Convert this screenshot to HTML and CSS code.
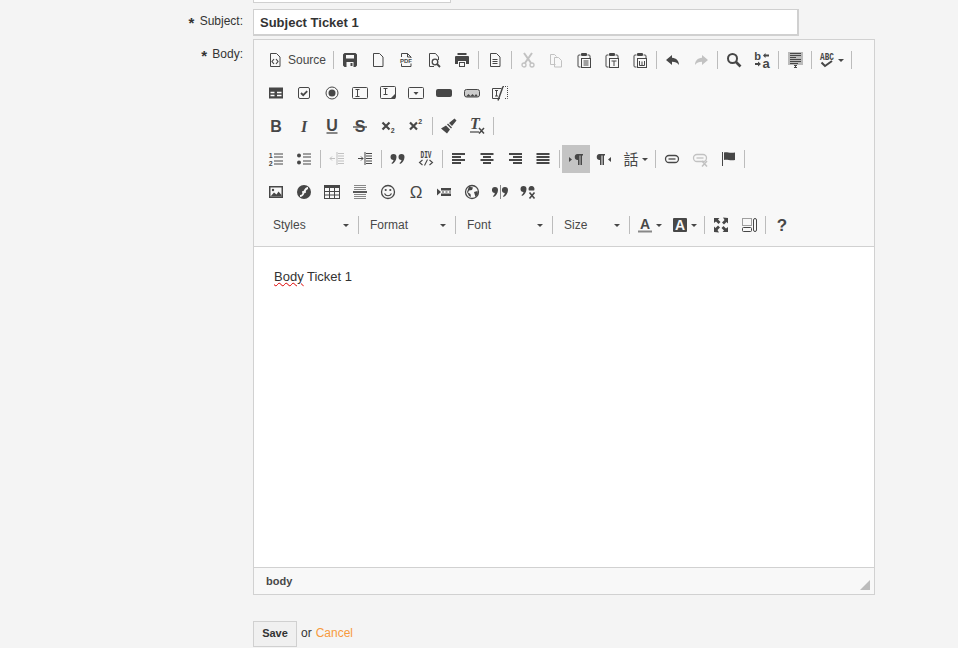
FILE: index.html
```html
<!DOCTYPE html>
<html>
<head>
<title>Edit Ticket</title>
<link rel="stylesheet" href="styles.css">
</head>
<body>
<svg class="defs" width="0" height="0">
  <symbol id="i-source" viewBox="0 0 16 16"><path d="M3.500 1.500h6l3.500 3.500v9.500h-9.500z" fill="none" stroke="currentColor"/><path d="M7 7l-2 2.500 2 2.500M9 7l2 2.500-2 2.500" fill="none" stroke="currentColor" stroke-width="1.200"/></symbol>
  <symbol id="i-save" viewBox="0 0 16 16"><path fill-rule="evenodd" d="M2.500 1h11l1.500 1.500v11l-1.500 1.500h-11l-1.500-1.500v-11zM4 3v3.500h8v-3.500zM4.500 10v5h7v-5zM8.500 11h2v3h-2z" fill="currentColor"/></symbol>
  <symbol id="i-new" viewBox="0 0 16 16"><path d="M3.500 1.500h6l3.500 3.500v9.500h-9.500z" fill="none" stroke="currentColor"/></symbol>
  <symbol id="i-preview" viewBox="0 0 16 16"><path d="M8 14.500h-4.500v-13h6l3 3.500v3" fill="none" stroke="currentColor"/><circle cx="9" cy="10" r="2.800" fill="none" stroke="currentColor" stroke-width="1.300"/><path d="M11 12l3 3" stroke="currentColor" stroke-width="1.800"/></symbol>
  <symbol id="i-print" viewBox="0 0 16 16"><path fill-rule="evenodd" d="M3.500 1h9v2h-9zM2 4h12q1 0 1 1v7h-3v-3h-8v3h-3v-7q0-1 1-1zM5 10h6v5h-6zM6 11v3h4v-3z" fill="currentColor"/></symbol>
  <symbol id="i-template" viewBox="0 0 16 16"><path d="M3.500 1.500h6l3.500 3.500v9.500h-9.500z" fill="none" stroke="currentColor"/><path d="M5.500 7.500h5M5.500 9.500h5M5.500 11.500h5" stroke="currentColor"/></symbol>
  <symbol id="i-cut" viewBox="0 0 16 16"><path d="M4 1l7 10M12 1l-7 10" stroke="currentColor" stroke-width="2"/><circle cx="4" cy="13" r="2" fill="none" stroke="currentColor" stroke-width="1.300"/><circle cx="12" cy="13" r="2" fill="none" stroke="currentColor" stroke-width="1.300"/></symbol>
  <symbol id="i-copy" viewBox="0 0 16 16"><path d="M7.500 12.500h-5v-10h4l2 2M6.500 5.500h4l3 3v6.500h-7z" fill="none" stroke="currentColor"/></symbol>
  <symbol id="i-paste" viewBox="0 0 16 16"><path d="M4.500 15h-1.500q-1 0-1-1v-10q0-1 1-1h1.500M11.500 3h1.500q1 0 1 1v2" fill="none" stroke="currentColor"/><rect x="5" y="1" width="6" height="3" rx="1" fill="currentColor"/><rect x="5.500" y="6.500" width="9" height="9" fill="none" stroke="currentColor"/><path d="M7.500 9h5M7.500 11h5M7.500 13h5" stroke="currentColor"/></symbol>
  <symbol id="i-pastetext" viewBox="0 0 16 16"><path d="M4.500 15h-1.500q-1 0-1-1v-10q0-1 1-1h1.500M11.500 3h1.500q1 0 1 1v2" fill="none" stroke="currentColor"/><rect x="5" y="1" width="6" height="3" rx="1" fill="currentColor"/><rect x="5.500" y="6.500" width="9" height="9" fill="none" stroke="currentColor"/><path d="M7.500 9h5M10 9v5" stroke="currentColor"/></symbol>
  <symbol id="i-pasteword" viewBox="0 0 16 16"><path d="M4.500 15h-1.500q-1 0-1-1v-10q0-1 1-1h1.500M11.500 3h1.500q1 0 1 1v2" fill="none" stroke="currentColor"/><rect x="5" y="1" width="6" height="3" rx="1" fill="currentColor"/><rect x="5.500" y="6.500" width="9" height="9" fill="none" stroke="currentColor"/><path d="M7.500 9v4.500h5v-4.500M10 9.500v4" fill="none" stroke="currentColor"/></symbol>
  <symbol id="i-undo" viewBox="0 0 16 16"><path d="M7 3l-6 5 6 5v-3.200c3 0 5.500 1 7 3.200 0-4-2.500-7-7-7.200z" fill="currentColor"/></symbol>
  <symbol id="i-redo" viewBox="0 0 16 16"><path d="M9 3l6 5-6 5v-3.200c-3 0-5.500 1-7 3.200 0-4 2.500-7 7-7.200z" fill="currentColor"/></symbol>
  <symbol id="i-find" viewBox="0 0 16 16"><circle cx="6.500" cy="6.500" r="4.500" fill="none" stroke="currentColor" stroke-width="2"/><path d="M10 10l4.500 4.500" stroke="currentColor" stroke-width="2.600"/></symbol>
  <symbol id="i-selectall" viewBox="0 0 16 16"><rect x="1" y="0" width="15" height="13" fill="#bbb"/><path d="M3 1.500h11M3 3.500h11M3 5.500h6M3 7.500h11M3 9.500h11M3 11.500h8" stroke="currentColor"/><path d="M7 13.500h3M8.500 13.500v2M7 15.500h3" stroke="currentColor"/></symbol>
  <symbol id="i-form" viewBox="0 0 16 16"><rect x="1" y="2.500" width="14" height="11" fill="currentColor"/><path d="M2.500 7.500h4M9 7.500h4.500M2.500 10.500h4M9 10.500h4.500" stroke="#fff" stroke-width="1.500"/></symbol>
  <symbol id="i-check" viewBox="0 0 16 16"><rect x="2.500" y="2.500" width="11" height="11" rx="1.500" fill="none" stroke="currentColor"/><path d="M5 8l2.200 2.200 4-4" fill="none" stroke="currentColor" stroke-width="1.800"/></symbol>
  <symbol id="i-radio" viewBox="0 0 16 16"><circle cx="8" cy="8" r="6" fill="none" stroke="currentColor"/><circle cx="8" cy="8" r="3.500" fill="currentColor"/></symbol>
  <symbol id="i-field" viewBox="0 0 16 16"><rect x=".5" y="2.500" width="15" height="11" rx="1" fill="none" stroke="currentColor"/><path d="M3.500 4.500h4M5.500 4.500v7M3.500 11.500h4" stroke="currentColor"/></symbol>
  <symbol id="i-textarea" viewBox="0 0 16 16"><rect x=".5" y="1.500" width="15" height="12" rx="1" fill="none" stroke="currentColor"/><path d="M3.500 3.500h4M5.500 3.500v6M3.500 9.500h4" stroke="currentColor"/><path d="M15 9l-5 5h5z" fill="currentColor"/></symbol>
  <symbol id="i-select" viewBox="0 0 16 16"><rect x=".5" y="2.500" width="15" height="11" rx="1" fill="none" stroke="currentColor"/><path d="M5.500 7h5l-2.500 3z" fill="currentColor"/></symbol>
  <symbol id="i-button" viewBox="0 0 16 16"><rect y="4" width="16" height="8" rx="2" fill="currentColor"/></symbol>
  <symbol id="i-imagebtn" viewBox="0 0 16 16"><rect x=".5" y="4.500" width="15" height="7.500" rx="2" fill="#ccc" stroke="currentColor"/><path d="M2 11.500l2.500-2.500 2 2 2-2 2 2 1.500-2 2 2.500z" fill="currentColor"/></symbol>
  <symbol id="i-hidden" viewBox="0 0 16 16"><path d="M8 13.500h-7.500v-10h9" fill="none" stroke="currentColor"/><path d="M3 5.500h3M4.500 5.500v5.500M3 11h3" stroke="currentColor"/><path d="M6 15.500l5-14" stroke="currentColor" stroke-width="1.500"/><path d="M11 1.500h4.500v12h-3" fill="none" stroke="currentColor" stroke-dasharray="1 1"/></symbol>
  <symbol id="i-brush" viewBox="0 0 16 16"><path d="M13.500 .5l2 2-4.500 5.500-3-3zM7 5.500l4 4-1 1-4-4zM5 7.500l4 4-3 4-6-5z" fill="currentColor"/></symbol>
  <symbol id="i-ul" viewBox="0 0 16 16"><circle cx="3" cy="4.500" r="2" fill="currentColor"/><circle cx="3" cy="11.500" r="2" fill="currentColor"/><path d="M7 3h8M7 6h8M7 10h8M7 13h8" stroke="currentColor"/></symbol>
  <symbol id="i-outdent" viewBox="0 0 16 16"><path d="M9 2.500h6M9 5h6M9 7.500h6M9 10h6M9 12.500h6M8 1v13" stroke="currentColor"/><path d="M1 7.500h5M3 5.500l-2 2 2 2" fill="none" stroke="currentColor"/></symbol>
  <symbol id="i-indent" viewBox="0 0 16 16"><path d="M9 2.500h6M9 5h6M9 7.500h6M9 10h6M9 12.500h6M8 1v13" stroke="currentColor"/><path d="M1 7.500h5M4 5.500l2 2-2 2" fill="none" stroke="currentColor"/></symbol>
  <symbol id="i-quote" viewBox="0 0 16 16"><path fill-rule="evenodd" d="M3.500 3a3 3 0 0 1 3 3c0 3-2 6-4.500 7l-.5-1c1-.7 1.800-1.700 2-3a3 3 0 0 1 0-6zM11.500 3a3 3 0 0 1 3 3c0 3-2 6-4.500 7l-.5-1c1-.7 1.800-1.700 2-3a3 3 0 0 1 0-6z" fill="currentColor"/></symbol>
  <symbol id="i-left" viewBox="0 0 16 16"><path d="M1 3h13M1 6h9M1 9h13M1 12h9" stroke="currentColor" stroke-width="2"/></symbol>
  <symbol id="i-center" viewBox="0 0 16 16"><path d="M1.500 3h13M4 6h8M1.500 9h13M4 12h8" stroke="currentColor" stroke-width="2"/></symbol>
  <symbol id="i-right" viewBox="0 0 16 16"><path d="M2 3h13M6 6h9M2 9h13M6 12h9" stroke="currentColor" stroke-width="2"/></symbol>
  <symbol id="i-justify" viewBox="0 0 16 16"><path d="M1.500 3h13M1.500 6h13M1.500 9h13M1.500 12h13" stroke="currentColor" stroke-width="2"/></symbol>
  <symbol id="i-ltr" viewBox="0 0 16 16"><path d="M1 6l3 2.500-3 2.500z" fill="currentColor"/><path fill-rule="evenodd" d="M9 3h6v1.500h-1v9.500h-1.500v-9.500h-1v9.500h-1.500v-5a2.800 2.800 0 0 1-.5-6z" fill="currentColor"/></symbol>
  <symbol id="i-rtl" viewBox="0 0 16 16"><path d="M15 6l-3 2.500 3 2.500z" fill="currentColor"/><path fill-rule="evenodd" d="M3 3h6v1.500h-1v9.500h-1.500v-9.500h-1v9.500h-1.500v-5a2.800 2.800 0 0 1-.5-6z" fill="currentColor"/></symbol>
  <symbol id="i-link" viewBox="0 0 16 16"><rect x="1.500" y="4.500" width="13" height="7" rx="3.500" fill="none" stroke="currentColor" stroke-width="1.300"/><path d="M4.500 8h7" stroke="currentColor" stroke-width="1.300"/></symbol>
  <symbol id="i-unlink" viewBox="0 0 16 16"><rect x="1.500" y="3.500" width="13" height="7" rx="3.500" fill="none" stroke="currentColor" stroke-width="1.300"/><path d="M4.500 7h7" stroke="currentColor" stroke-width="1.300"/><path d="M10 10l5 5.500M15 10l-5 5.500" stroke="currentColor" stroke-width="1.500"/></symbol>
  <symbol id="i-anchor" viewBox="0 0 16 16"><path d="M2.500 1v14" stroke="currentColor"/><path d="M4 1.500c3-1 5 1 11 0v7.500c-5 1-8-1-11 0z" fill="currentColor"/></symbol>
  <symbol id="i-image" viewBox="0 0 16 16"><rect x="1" y="2" width="14" height="12" fill="currentColor"/><rect x="2.500" y="3.500" width="11" height="9" fill="#f8f8f8"/><path d="M2.500 12.500l3.500-4 2.500 2 2-3 3 3.500v1.500z" fill="currentColor"/><circle cx="5" cy="6" r="1.200" fill="currentColor"/></symbol>
  <symbol id="i-flash" viewBox="0 0 16 16"><circle cx="8" cy="8" r="7" fill="currentColor"/><path d="M4 12c3 0 3-2 4-4s2-4 4-4" fill="none" stroke="#f8f8f8" stroke-width="1.800"/><path d="M6 8h4" stroke="#f8f8f8" stroke-width="1.500"/></symbol>
  <symbol id="i-table" viewBox="0 0 16 16"><rect x=".5" y="1.500" width="15" height="13" fill="none" stroke="currentColor"/><rect x="1" y="2" width="14" height="2" fill="currentColor"/><path d="M5.500 4v10M10.500 4v10M1 7.500h14M1 11h14" stroke="currentColor"/></symbol>
  <symbol id="i-hr" viewBox="0 0 16 16"><path d="M2 1.500h12M2 3.500h12M2 5.500h12M2 10.500h12M2 12.500h12M2 14.500h12" stroke="#888"/><path d="M1 8h14" stroke="currentColor" stroke-width="1.800"/></symbol>
  <symbol id="i-smiley" viewBox="0 0 16 16"><circle cx="8" cy="8" r="6.500" fill="none" stroke="currentColor" stroke-width="1.300"/><circle cx="5.700" cy="6" r="1.100" fill="currentColor"/><circle cx="10.300" cy="6" r="1.100" fill="currentColor"/><path d="M4.500 9.500c1.500 3 5.500 3 7 0" fill="none" stroke="currentColor" stroke-width="1.200"/></symbol>
  <symbol id="i-pagebreak" viewBox="0 0 16 16"><path d="M1 4.500l4 3.500-4 3.500z" fill="currentColor"/><path d="M5 4h10v2.500h-10zM5 9.500h10v2.500h-10z" fill="currentColor"/><path d="M6 8h2M9.500 8h2M13 8h2" stroke="currentColor"/></symbol>
  <symbol id="i-iframe" viewBox="0 0 16 16"><circle cx="8" cy="8" r="6.500" fill="none" stroke="currentColor" stroke-width="1.300"/><path d="M5 2.500l4 1-1 2.500-3 .5-1 2 2.500 1.500.5 3-2-1-2-4zM10 8l3.500-1 .5 3-2.500 3z" fill="currentColor"/></symbol>
  <symbol id="i-quotesplit" viewBox="0 0 16 16"><path fill-rule="evenodd" d="M3 3a3 3 0 0 1 3 3c0 3-2 6-4.500 7l-.5-1c1-.7 1.600-1.700 1.800-3a3 3 0 0 1 .2-6zM13 3a3 3 0 0 1 3 3c0 3-2 6-4.500 7l-.5-1c1-.7 1.600-1.700 1.800-3a3 3 0 0 1 .2-6z" fill="currentColor"/><path d="M8.500 1v14" stroke="#888"/></symbol>
  <symbol id="i-quotex" viewBox="0 0 16 16"><path fill-rule="evenodd" d="M3.500 2a3 3 0 0 1 3 3c0 3-2 6-4.500 7l-.5-1c1-.7 1.800-1.700 2-3a3 3 0 0 1 0-6zM11.500 2a3 3 0 0 1 2.600 4.500h-5.200a3 3 0 0 1 2.600-4.500z" fill="currentColor"/><path d="M9.500 8.500l5 6M14.500 8.500l-5 6" stroke="currentColor" stroke-width="1.600"/></symbol>
  <symbol id="i-max" viewBox="0 0 16 16"><path d="M1 1h5.500l-1.500 1.500 2.500 2.500-2 2-2.500-2.500-2 1.500zM15 1v5.500l-1.500-1.500-2.500 2.500-2-2 2.500-2.500-1.500-2.500zM1 15v-5.500l1.500 1.500 2.500-2.500 2 2-2.500 2.500 1.500 2.500zM15 15h-5.500l1.500-1.500-2.500-2.500 2-2 2.500 2.500 2-1.500z" fill="currentColor"/></symbol>
  <symbol id="i-blocks" viewBox="0 0 16 16"><path d="M1.500 1.500h9v7h-9z" fill="none" stroke="currentColor" stroke-dasharray="1 1"/><rect x="1.500" y="10.500" width="9" height="4" rx="1" fill="none" stroke="currentColor"/><rect x="12.500" y="1.500" width="3" height="13" rx="1.500" fill="none" stroke="currentColor"/></symbol>
</svg>

<form class="ticket">
  <div class="stub"></div>

  <div class="row row-subject">
    <label class="lbl"><span class="req">*</span> Subject:</label>
    <input class="subject" type="text" value="Subject Ticket 1">
  </div>

  <div class="row row-body">
    <label class="lbl"><span class="req">*</span> Body:</label>
    <div class="editor">
      <div class="toolbar">
        <div class="tb-row">
          <a class="btn btn-source"><svg class="ico"><use href="#i-source"/></svg><span>Source</span></a>
          <i class="sep"></i>
          <a class="btn"><svg class="ico"><use href="#i-save"/></svg></a>
          <a class="btn"><svg class="ico"><use href="#i-new"/></svg></a>
          <a class="btn"><svg class="ico" viewBox="0 0 16 16"><path d="M3.500 5v-3.500h6l3.500 3.500v1M3.500 11.500v3h9.500v-3M9.500 1.500v3.500h3.500" fill="none" stroke="currentColor"/><text x="8" y="10.500" class="t-pdf">PDF</text></svg></a>
          <a class="btn"><svg class="ico"><use href="#i-preview"/></svg></a>
          <a class="btn"><svg class="ico"><use href="#i-print"/></svg></a>
          <i class="sep"></i>
          <a class="btn"><svg class="ico"><use href="#i-template"/></svg></a>
          <i class="sep"></i>
          <a class="btn off"><svg class="ico"><use href="#i-cut"/></svg></a>
          <a class="btn off"><svg class="ico"><use href="#i-copy"/></svg></a>
          <a class="btn"><svg class="ico"><use href="#i-paste"/></svg></a>
          <a class="btn"><svg class="ico"><use href="#i-pastetext"/></svg></a>
          <a class="btn"><svg class="ico"><use href="#i-pasteword"/></svg></a>
          <i class="sep"></i>
          <a class="btn"><svg class="ico"><use href="#i-undo"/></svg></a>
          <a class="btn off"><svg class="ico"><use href="#i-redo"/></svg></a>
          <i class="sep"></i>
          <a class="btn"><svg class="ico"><use href="#i-find"/></svg></a>
          <a class="btn"><svg class="ico" viewBox="0 0 16 16"><text x="3.500" y="8" class="t-rep">b</text><text x="12" y="15.500" class="t-rep t-rep-a">a</text><path d="M9 3.500l2.500-2.500v1.500h3.500v2h-3.500v1.500zM1 11h3v-1.500l3 2.500-3 2.500v-1.500h-3z" fill="currentColor"/></svg></a>
          <i class="sep"></i>
          <a class="btn"><svg class="ico"><use href="#i-selectall"/></svg></a>
          <i class="sep"></i>
          <a class="btn btn-menu"><svg class="ico" viewBox="0 0 16 16"><text x="8" y="7.500" class="t-mono" textLength="14" lengthAdjust="spacingAndGlyphs">ABC</text><path d="M2.500 10.500l3.500 3.500 7-5" fill="none" stroke="currentColor" stroke-width="2"/></svg><b class="caret"></b></a>
          <i class="sep"></i>
        </div>
        <div class="tb-row">
          <a class="btn"><svg class="ico"><use href="#i-form"/></svg></a>
          <a class="btn"><svg class="ico"><use href="#i-check"/></svg></a>
          <a class="btn"><svg class="ico"><use href="#i-radio"/></svg></a>
          <a class="btn"><svg class="ico"><use href="#i-field"/></svg></a>
          <a class="btn"><svg class="ico"><use href="#i-textarea"/></svg></a>
          <a class="btn"><svg class="ico"><use href="#i-select"/></svg></a>
          <a class="btn"><svg class="ico"><use href="#i-button"/></svg></a>
          <a class="btn"><svg class="ico"><use href="#i-imagebtn"/></svg></a>
          <a class="btn"><svg class="ico"><use href="#i-hidden"/></svg></a>
        </div>
        <div class="tb-row">
          <a class="btn"><svg class="ico" viewBox="0 0 16 16"><text x="8" y="14" class="t-big">B</text></svg></a>
          <a class="btn"><svg class="ico" viewBox="0 0 16 16"><text x="8" y="14" class="t-ital">I</text></svg></a>
          <a class="btn"><svg class="ico" viewBox="0 0 16 16"><text x="8" y="12.500" class="t-big">U</text><path d="M2.500 15h11" stroke="currentColor" stroke-width="1.300"/></svg></a>
          <a class="btn"><svg class="ico" viewBox="0 0 16 16"><text x="8" y="14" class="t-big">S</text><path d="M1 9h14" stroke="currentColor" stroke-width="1.300"/></svg></a>
          <a class="btn"><svg class="ico" viewBox="0 0 16 16"><path d="M2.500 4.500l7 7M9.500 4.500l-7 7" stroke="currentColor" stroke-width="2.200"/><text x="12.800" y="15" class="t-num">2</text></svg></a>
          <a class="btn"><svg class="ico" viewBox="0 0 16 16"><path d="M2 4.500l7 7M9 4.500l-7 7" stroke="currentColor" stroke-width="2.200"/><text x="12.300" y="6" class="t-num">2</text></svg></a>
          <i class="sep"></i>
          <a class="btn"><svg class="ico"><use href="#i-brush"/></svg></a>
          <a class="btn"><svg class="ico" viewBox="0 0 16 16"><text x="6" y="11" class="t-ital">T</text><path d="M1 14h9" stroke="currentColor" stroke-width="1.200"/><path d="M10 10l5 5.500M15 10l-5 5.500" stroke="currentColor" stroke-width="1.500"/></svg></a>
          <i class="sep"></i>
        </div>
        <div class="tb-row">
          <a class="btn"><svg class="ico" viewBox="0 0 16 16"><path d="M6 3h9M6 6h9M6 10h9M6 13h9" stroke="currentColor"/><text x="2.800" y="6.500" class="t-num">1</text><text x="2.800" y="14.500" class="t-num">2</text></svg></a>
          <a class="btn"><svg class="ico"><use href="#i-ul"/></svg></a>
          <i class="sep"></i>
          <a class="btn off"><svg class="ico"><use href="#i-outdent"/></svg></a>
          <a class="btn"><svg class="ico"><use href="#i-indent"/></svg></a>
          <i class="sep"></i>
          <a class="btn"><svg class="ico"><use href="#i-quote"/></svg></a>
          <a class="btn"><svg class="ico" viewBox="0 0 16 16"><text x="8" y="6.500" class="t-mono" textLength="11" lengthAdjust="spacingAndGlyphs">DIV</text><path d="M4.500 9l-3 2.500 3 2.500M11.500 9l3 2.500-3 2.500M9.500 8.500l-3 6" fill="none" stroke="currentColor" stroke-width="1.100"/></svg></a>
          <i class="sep"></i>
          <a class="btn"><svg class="ico"><use href="#i-left"/></svg></a>
          <a class="btn"><svg class="ico"><use href="#i-center"/></svg></a>
          <a class="btn"><svg class="ico"><use href="#i-right"/></svg></a>
          <a class="btn"><svg class="ico"><use href="#i-justify"/></svg></a>
          <i class="sep"></i>
          <a class="btn on"><svg class="ico"><use href="#i-ltr"/></svg></a>
          <a class="btn"><svg class="ico"><use href="#i-rtl"/></svg></a>
          <a class="btn btn-menu"><svg class="ico" viewBox="0 0 16 16"><text x="8" y="14" class="t-cjk">話</text></svg><b class="caret"></b></a>
          <i class="sep"></i>
          <a class="btn"><svg class="ico"><use href="#i-link"/></svg></a>
          <a class="btn off"><svg class="ico"><use href="#i-unlink"/></svg></a>
          <a class="btn"><svg class="ico"><use href="#i-anchor"/></svg></a>
          <i class="sep"></i>
        </div>
        <div class="tb-row">
          <a class="btn"><svg class="ico"><use href="#i-image"/></svg></a>
          <a class="btn"><svg class="ico"><use href="#i-flash"/></svg></a>
          <a class="btn"><svg class="ico"><use href="#i-table"/></svg></a>
          <a class="btn"><svg class="ico"><use href="#i-hr"/></svg></a>
          <a class="btn"><svg class="ico"><use href="#i-smiley"/></svg></a>
          <a class="btn"><svg class="ico" viewBox="0 0 16 16"><text x="8" y="14" class="t-omega">Ω</text></svg></a>
          <a class="btn"><svg class="ico"><use href="#i-pagebreak"/></svg></a>
          <a class="btn"><svg class="ico"><use href="#i-iframe"/></svg></a>
          <a class="btn"><svg class="ico"><use href="#i-quotesplit"/></svg></a>
          <a class="btn"><svg class="ico"><use href="#i-quotex"/></svg></a>
        </div>
        <div class="tb-row">
          <a class="combo combo-first"><span>Styles</span><b class="caret"></b></a>
          <i class="sep"></i>
          <a class="combo"><span>Format</span><b class="caret"></b></a>
          <i class="sep"></i>
          <a class="combo"><span>Font</span><b class="caret"></b></a>
          <i class="sep"></i>
          <a class="combo combo-size"><span>Size</span><b class="caret"></b></a>
          <i class="sep"></i>
          <a class="btn btn-menu"><svg class="ico" viewBox="0 0 16 16"><text x="8" y="12" class="t-color">A</text><path d="M1 14.500h14" stroke="#888" stroke-width="2"/></svg><b class="caret"></b></a>
          <a class="btn btn-menu"><svg class="ico" viewBox="0 0 16 16"><rect x="1" y="1" width="14" height="14" rx="1" fill="currentColor"/><text x="8" y="13" class="t-color t-white">A</text></svg><b class="caret"></b></a>
          <i class="sep"></i>
          <a class="btn"><svg class="ico"><use href="#i-max"/></svg></a>
          <a class="btn"><svg class="ico"><use href="#i-blocks"/></svg></a>
          <i class="sep"></i>
          <a class="btn"><svg class="ico" viewBox="0 0 16 16"><text x="8" y="14" class="t-help">?</text></svg></a>
        </div>
      </div>
      <div class="content"><p><span class="misspelt">Body</span> Ticket 1</p></div>
      <div class="path">body<span class="grip"></span></div>
    </div>
  </div>

  <div class="actions">
    <button class="save" type="button">Save</button>
    <span class="or">or</span>
    <a class="cancel">Cancel</a>
  </div>
</form>
</body>
</html>
```

FILE: styles.css
```css
body {
    margin: 0;
    background: #f4f4f4;
    color: #333;
    font-family: "Liberation Sans", Arial, sans-serif;
    font-size: 12px;
    overflow: hidden;
}

.defs {
    position: absolute;
}

.ticket {
    width: 875px;
}

.stub {
    width: 198px;
    height: 3px;
    margin-left: 253px;
    background: #fff;
    border: 1px solid #d0d0d0;
    border-top: 0;
    box-sizing: border-box;
}

.row {
    display: flex;
    gap: 10px;
}

.row-subject {
    margin-top: 6px;
}

.row-body {
    margin-top: 3px;
}

.lbl {
    width: 243px;
    flex: none;
    text-align: right;
    padding-top: 5px;
    box-sizing: border-box;
    line-height: 14px;
}

.row-body .lbl {
    padding-top: 8px;
}

.req {
    font-weight: bold;
    font-size: 15px;
    line-height: 12px;
    margin-right: 2px;
    vertical-align: -3px;
}

.subject {
    width: 546px;
    height: 27px;
    box-sizing: border-box;
    margin: 0;
    padding: 0 6px;
    border: 1px solid #d0d0d0;
    border-width: 1px 2px 2px 1px;
    background: #fff;
    color: #333;
    font: bold 13px "Liberation Sans", Arial, sans-serif;
    outline: 0;
}

.editor {
    width: 622px;
    height: 556px;
    box-sizing: border-box;
    border: 1px solid #d1d1d1;
    background: #f8f8f8;
    display: flex;
    flex-direction: column;
}

.toolbar {
    padding: 6px 0 0 8px;
    height: 207px;
    box-sizing: border-box;
    border-bottom: 1px solid #d1d1d1;
    display: flex;
    flex-direction: column;
    gap: 5px;
}

.tb-row {
    display: flex;
    align-items: center;
    height: 28px;
}

.btn {
    flex: none;
    width: 28px;
    height: 28px;
    display: flex;
    align-items: center;
    justify-content: center;
    color: #474747;
}

.ico {
    width: 16px;
    height: 16px;
    flex: none;
    overflow: visible;
}

.off .ico {
    opacity: .3;
}

.on {
    background: #c4c4c4;
}

.btn-source {
    width: 69px;
    justify-content: flex-start;
    padding-left: 5px;
    box-sizing: border-box;
    gap: 5px;
}

.btn-menu {
    width: 35px;
    justify-content: flex-start;
    padding-left: 5px;
    box-sizing: border-box;
    gap: 3px;
}

.caret {
    width: 0;
    height: 0;
    border: 3px solid transparent;
    border-top-color: #474747;
    border-bottom: 0;
    flex: none;
}

.sep {
    flex: none;
    width: 1px;
    height: 18px;
    margin: 0 2px;
    background: #bcbcbc;
}

.combo {
    flex: none;
    width: 92px;
    height: 28px;
    box-sizing: border-box;
    padding: 0 7px 0 9px;
    display: flex;
    align-items: center;
    justify-content: space-between;
    color: #484848;
}

.combo-first {
    margin-left: 2px;
}

.combo-size {
    width: 72px;
}

.content {
    flex: 1;
    background: #fff;
    padding: 0 20px;
    font-size: 13px;
    color: #333;
}

.content p {
    margin: 21px 0 0;
    line-height: 18px;
}

.misspelt {
    text-decoration: underline wavy #d00;
    text-decoration-thickness: 1px;
}

.path {
    position: relative;
    height: 26px;
    padding-left: 12px;
    line-height: 26px;
    border-top: 1px solid #d1d1d1;
    font-size: 11px;
    font-weight: bold;
    color: #484848;
}

.grip {
    position: absolute;
    right: 4px;
    bottom: 4px;
    width: 0;
    height: 0;
    border-left: 10px solid transparent;
    border-bottom: 10px solid #bcbcbc;
}

.actions {
    margin: 26px 0 0 253px;
    display: flex;
    align-items: center;
    gap: 3px;
}

.save {
    width: 44px;
    height: 26px;
    padding: 0 0 2px;
    margin-right: 1px;
    border: 1px solid #d0d0d0;
    background: #f0f0f0;
    color: #333;
    font: bold 11px "Liberation Sans", Arial, sans-serif;
}

.or, .cancel {
    margin-bottom: 2px;
}

.or {
    margin-right: 1px;
}

.cancel {
    color: #f79a3e;
}

.ico text {
    fill: currentColor;
    text-anchor: middle;
}

.t-pdf {
    font: bold 6px "Liberation Sans", sans-serif;
}

.t-rep {
    font: bold 11px "Liberation Sans", sans-serif;
}

.t-rep-a {
    font-size: 13px;
}

.t-mono {
    font: bold 10px "Liberation Mono", monospace;
}

.t-num {
    font: bold 7px "Liberation Sans", sans-serif;
}

.t-big {
    font: bold 16px "Liberation Sans", sans-serif;
}

.t-ital {
    font: italic bold 16px "Liberation Serif", serif;
}

.t-color {
    font: bold 14px "Liberation Sans", sans-serif;
}

.ico .t-white {
    fill: #f8f8f8;
}

.t-cjk {
    font: 15px "Noto Sans CJK TC", sans-serif;
}

.t-omega {
    font: 17px "Liberation Sans", sans-serif;
}

.t-help {
    font: bold 17px "Liberation Sans", sans-serif;
}
```
